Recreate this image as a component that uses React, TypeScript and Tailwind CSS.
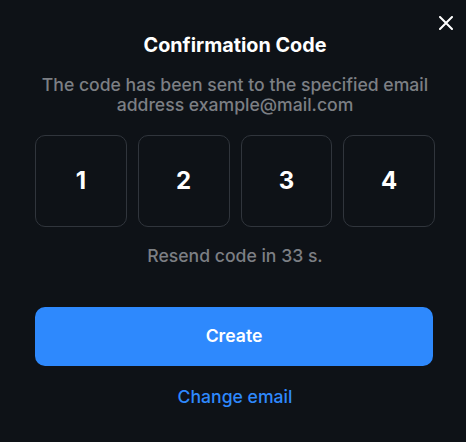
import React from "react";

export default function App() {
  const digits = ["1", "2", "3", "4"];
  return (
    <div
      className="relative w-[466px] h-[442px] bg-[#0e1217] overflow-hidden"
      style={{ fontFamily: "Inter, 'Liberation Sans', sans-serif" }}
    >
      <button className="absolute top-[16px] left-[439px] w-[14px] h-[14px] flex items-center justify-center">
        <svg width="14" height="14" viewBox="0 0 14 14" fill="none">
          <path d="M1 1L13 13M13 1L1 13" stroke="#ffffff" strokeWidth="2" strokeLinecap="round" />
        </svg>
      </button>
      <div className="flex flex-col items-center pl-[35px] pr-[31px] pt-[31px]">
        <h1 className="text-[19.8px] leading-[28px] font-bold text-white">Confirmation Code</h1>
        <p className="mt-[16px] text-[17.6px] leading-[20px] font-medium text-[#7c7f84] text-center">
          The code has been sent to the specified email
          <br />
          address example@mail.com
        </p>
        <div className="mt-[20px] grid grid-cols-4 gap-[11px] w-full">
          {digits.map((d) => (
            <div
              key={d}
              className="h-[92px] rounded-[10px] border border-[#30353c] flex items-center justify-center text-white text-[24px] font-bold"
            >
              {d}
            </div>
          ))}
        </div>
        <p className="mt-[19px] text-[17.6px] leading-[20px] font-medium text-[#7c7f84]">Resend code in 33 s.</p>
        <button className="mt-[41px] w-[398px] self-start h-[59px] rounded-[10px] bg-[#2e89fd] text-white text-[17.6px] font-semibold">
          Create
        </button>
        <button className="mt-[19px] text-[17.6px] leading-[24px] font-medium text-[#2e89fd]">Change email</button>
      </div>
    </div>
  );
}
